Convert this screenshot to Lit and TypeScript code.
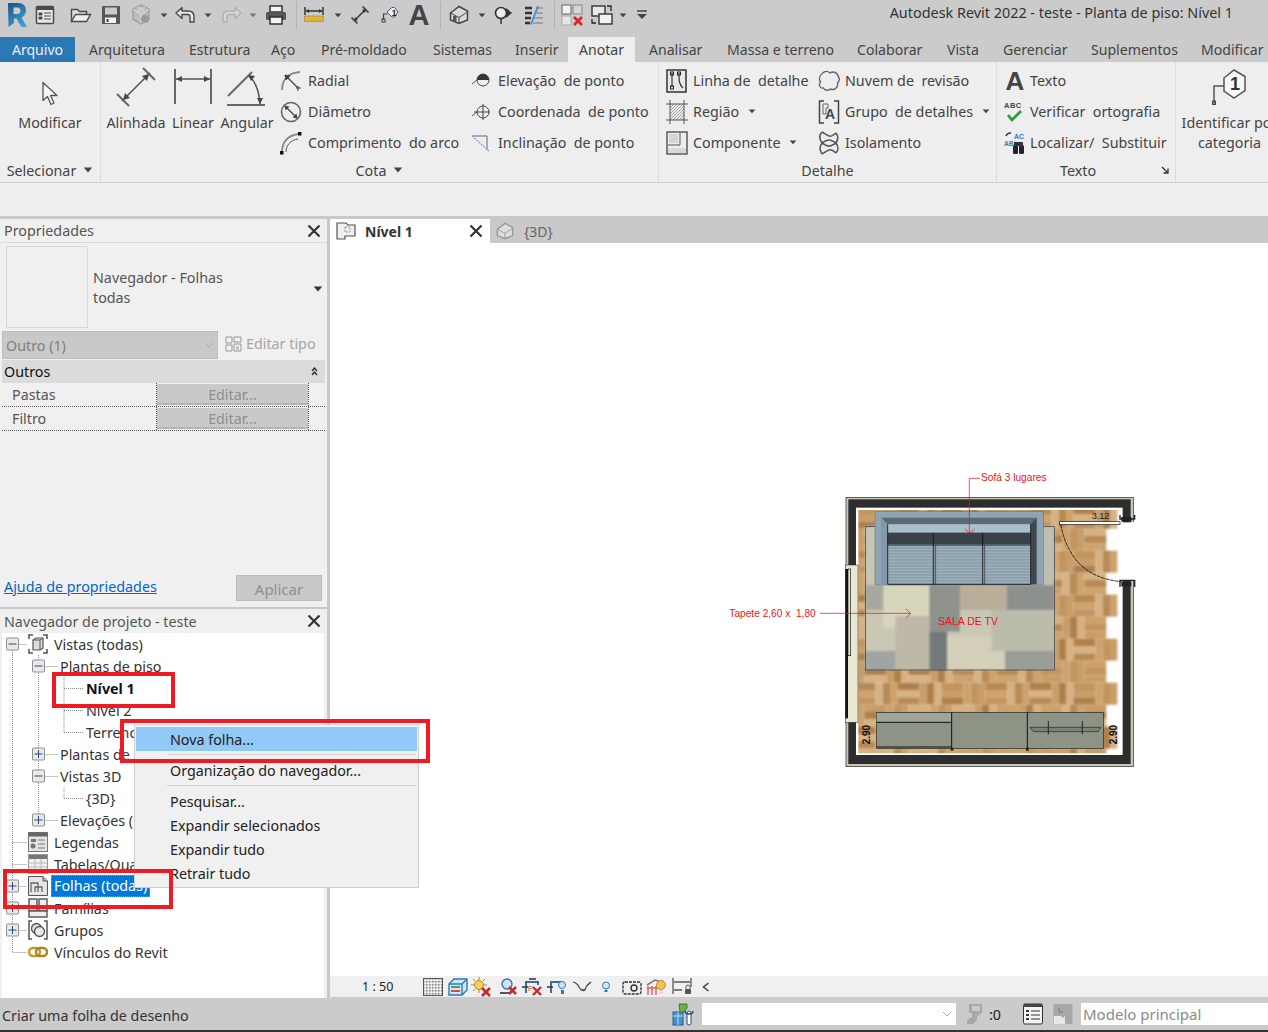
import { LitElement, html, css, svg } from "lit";
import { customElement } from "lit/decorators.js";

const G = "#4a4a4a";
const ic = (w: number, h: number, c: unknown, vb?: string) =>
  html`<svg class="ic" width=${w} height=${h} viewBox=${vb || `0 0 ${w} ${h}`}>${c}</svg>`;
const caret = (c = "#444", w = 8) => html`<svg class="ic" width=${w} height=${w * 0.6} viewBox="0 0 8 5"><path d="M0.500 0.500h7L4 4.500z" fill=${c}/></svg>`;

/* ---------- quick access icons ---------- */
const q = {
  logo: ic(22, 28, svg`<defs><linearGradient id="rg" x1="0" y1="0" x2="0.6" y2="1"><stop offset="0" stop-color="#1f4e86"/><stop offset="1" stop-color="#3aa0d8"/></linearGradient></defs>
    <path fill-rule="evenodd" d="M2 2h10c5.500 0 8 3 8 7.500 0 3.500-2 6-4.500 7l5.500 9.500h-5.500l-5-8.500h-2.500v4.500l-5.500 4zM7.500 6.500v6.500h4c2 0 3-1.500 3-3.300s-1-3.200-3-3.200z" fill="url(#rg)"/>`),
  list: ic(20, 20, svg`<rect x="1.500" y="1.500" width="17" height="17" rx="1" fill="#e8e8e8" stroke=${G} stroke-width="1.500"/><rect x="2" y="2" width="16" height="3" fill=${G}/><path d="M4 8h3v2H4zM4 12h3v2H4zM9 8h7M9 11h7M9 14h7" stroke=${G} fill=${G}/>`),
  open: ic(22, 18, svg`<path d="M1.500 15.500v-12h6l2 2h7v3" fill="#ddd" stroke=${G} stroke-width="1.400"/><path d="M1.500 15.500l4-7h15l-4 7z" fill="#eee" stroke=${G} stroke-width="1.400"/>`),
  save: ic(20, 20, svg`<rect x="1" y="1" width="18" height="18" rx="1" fill="#565656"/><rect x="4" y="2.500" width="12" height="7" fill="#c9c9c9"/><rect x="4" y="12.500" width="11" height="5.500" fill="#f2f2f2"/><rect x="5.500" y="14" width="2" height="3" fill="#444"/>`),
  cube: ic(22, 24, svg`<path d="M11 2l8 4v10l-8 5-8-5V6z" fill="#bdbdbd" stroke="#a2a2a2" stroke-width="1.500"/><path d="M3 6l8 5 8-5M11 11v9M7 4l8 5M15 4L7 9" fill="none" stroke="#e0e0e0"/><circle cx="15" cy="16" r="4" fill="#9a9a9a"/>`),
  undo: ic(22, 18, svg`<path d="M2 7l6-5.500v3.500h6c4 0 6 2 6 5.500V16h-4v-5c0-1.500-1-2.500-2.500-2.500H8v4z" fill="#e6e6e6" stroke=${G} stroke-width="1.400" stroke-linejoin="round"/>`),
  redo: ic(22, 18, svg`<path d="M20 7l-6-5.500v3.500H8c-4 0-6 2-6 5.500V16h4v-5c0-1.500 1-2.500 2.500-2.500H14v4z" fill="#d6d6d6" stroke="#b0b0b0" stroke-width="1.400" stroke-linejoin="round"/>`),
  print: ic(22, 20, svg`<rect x="5" y="1" width="12" height="6" fill="#f3f3f3" stroke="#333" stroke-width="1.500"/><rect x="1" y="7" width="20" height="8" rx="1.500" fill="#555"/><rect x="5" y="12" width="12" height="7" fill="#f3f3f3" stroke="#333" stroke-width="1.500"/>`),
  dim: ic(20, 20, svg`<path d="M1 2v8M19 2v8M2 6h16" stroke="#333" stroke-width="1.500"/><path d="M2 6l3-2v4zM18 6l-3-2v4z" fill="#333"/><rect x="0.500" y="11" width="19" height="5.500" fill="#e2b23c" stroke="#a88420" stroke-width="0.600"/>`),
  align: ic(20, 20, svg`<path d="M4.500 15.500L15.500 4.500" stroke="#333" stroke-width="1.500"/><path d="M1.500 12.500l6 6M12.500 1.500l6 6" stroke="#555" stroke-width="1.800"/><path d="M16 4l-1 4-3-3zM4 16l1-4 3 3z" fill="#333"/>`),
  tag: ic(18, 20, svg`<path d="M2.500 15v-6h4" fill="none" stroke="#444" stroke-width="1.200"/><rect x="1" y="14" width="3" height="3" fill="none" stroke="#444"/><path d="M6 7l5-4.500h2.500l3.500 4.500-3.500 5H11z" fill="#f3f3f3" stroke="#555"/><text x="10.700" y="10.500" font-size="8.500" font-weight="700" fill="#222" font-family="Liberation Sans">1</text>`),
  house: ic(20, 20, svg`<path d="M1.500 8L10 1.500 18.500 6v9L10 18.500 1.500 15z" fill="#d9d9d9" stroke="#444" stroke-width="1.500"/><path d="M1.500 8L10 12.500V18.500M10 12.500L18.500 7" fill="none" stroke="#444"/><rect x="4" y="11" width="3.500" height="5.500" fill="#555"/>`),
  pt: ic(20, 20, svg`<circle cx="8" cy="8" r="5.500" fill="#eaeaea" stroke="#333" stroke-width="1.600"/><path d="M13 3l6 5-6 5z" fill="#333"/><path d="M8 14v5" stroke="#333" stroke-width="1.500"/>`),
  lines: ic(20, 20, svg`<path d="M1 3h7M1 8h7M1 13h6M1 18h5" stroke="#333" stroke-width="2.500"/><path d="M12 3h7M11 8h8M10 13h9M9 18h10" stroke="#777" stroke-width="1.200"/><path d="M14 1L7 19.500" stroke="#3a8fe0" stroke-width="1.800"/>`),
  xgrid: ic(22, 22, svg`<rect x="1" y="1" width="9" height="9" fill="#f2f2f2" stroke="#666"/><rect x="12" y="1" width="9" height="9" fill="#d5d5d5" stroke="#888"/><rect x="1" y="12" width="9" height="9" fill="#e6e6e6" stroke="#aaa"/><path d="M13 13l8 8M21 13l-8 8" stroke="#d22" stroke-width="2.600"/>`),
  sw: ic(22, 22, svg`<rect x="1" y="2" width="13" height="10" fill="#e8e8e8" stroke="#333" stroke-width="1.400"/><rect x="8" y="10" width="13" height="10" fill="#f3f3f3" stroke="#333" stroke-width="1.400"/><path d="M16 2h4v5M1 15v4h4" fill="none" stroke="#222" stroke-width="1.300"/>`),
  more: ic(12, 12, svg`<path d="M1 2h10" stroke="#444" stroke-width="1.500"/><path d="M1 5h10L6 10z" fill="#444"/>`),
  sep: html`<span class="qsep"></span>`,
};
const qat: [number, number, unknown][] = [
  [17, 22, q.logo], [45, 20, q.list], [81, 22, q.open], [111, 20, q.save], [141, 22, q.cube], [164, 8, caret()],
  [185, 22, q.undo], [208, 8, caret()], [232, 22, q.redo], [253, 8, caret("#777")], [276, 22, q.print], [296, 1, q.sep],
  [314, 20, q.dim], [338, 8, caret()], [360, 20, q.align], [390, 18, q.tag], [419, 24, html`<span class="biga">A</span>`],
  [440, 1, q.sep], [459, 20, q.house], [482, 8, caret()], [503, 20, q.pt], [534, 20, q.lines], [554, 1, q.sep],
  [572, 22, q.xgrid], [602, 22, q.sw], [623, 8, caret()], [642, 12, q.more],
];

/* ---------- ribbon icons ---------- */
const r = {
  cursor: ic(18, 26, svg`<path d="M2 1.500v18l4.500-4 3.500 8 3-1.500-3.500-7.500H16z" fill="#f6f6f6" stroke="#555" stroke-width="1.300" stroke-linejoin="round"/>`),
  aligned: ic(40, 40, svg`<path d="M6 34L34 6" stroke="#555" stroke-width="1.600"/><path d="M1 27l12 12M27 1l12 12" stroke="#666" stroke-width="2"/><path d="M33 7l-2 7-5-5zM7 33l2-7 5 5z" fill="#3d4a55"/>`),
  linear: ic(40, 38, svg`<path d="M2 0v35M38 0v35" stroke="#666" stroke-width="2"/><path d="M3 10h34" stroke="#555" stroke-width="1.600"/><path d="M3 10l6-3v6zM37 10l-6-3v6z" fill="#3d4a55"/>`),
  angular: ic(40, 38, svg`<path d="M1 27L25 3" stroke="#666" stroke-width="2"/><path d="M0 36h38" stroke="#666" stroke-width="2"/><path d="M22 7c6 5 10 14 11 28" fill="none" stroke="#555" stroke-width="1.600"/><path d="M21 6l7 1-4 5zM33 35l-3-6h6z" fill="#3d4a55"/>`),
  radial: ic(22, 22, svg`<path d="M2 20c0-10 6-17 18-18" fill="none" stroke="#888" stroke-width="1.800"/><path d="M7 7l11 11" stroke="#444" stroke-width="1.200"/><path d="M5 5l5 1-4 4zM18 16v5M16 18h5" stroke="#444" fill="#444"/>`),
  diam: ic(22, 22, svg`<circle cx="11" cy="11" r="9.500" fill="#eee" stroke="#666" stroke-width="1.600"/><path d="M5 5l12 12" stroke="#444" stroke-width="1.200"/><path d="M4.500 4.500l5 1-4 4zM17.500 17.500l-5-1 4-4z" fill="#444"/>`),
  arc: ic(24, 24, svg`<path d="M3 21C3 11 9 4 20 3" fill="none" stroke="#888" stroke-width="1.800"/><path d="M7 21C7 14 12 9 19 8" fill="none" stroke="#555" stroke-width="1"/><rect x="19" y="1" width="3.500" height="3.500" fill="#111"/><rect x="1" y="20" width="3.500" height="3.500" fill="#111"/>`),
  elev: ic(20, 16, svg`<path d="M1 11l5-4h4" stroke="#555" fill="none"/><circle cx="12" cy="7" r="6" fill="#eee" stroke="#444"/><path d="M12 1a6 6 0 0 1 6 6H6a6 6 0 0 1 6-6z" fill="#333"/>`),
  coord: ic(20, 16, svg`<path d="M1 12l5-4" stroke="#555"/><circle cx="12" cy="8" r="6" fill="none" stroke="#444"/><path d="M3 8h16M12 0v16" stroke="#444"/>`),
  slope: ic(20, 18, svg`<path d="M1 2h15v14" fill="none" stroke="#666"/><path d="M1 2l17 15" stroke="#7fa9d6" stroke-width="1.400" stroke-dasharray="2 1"/>`),
  dline: ic(22, 24, svg`<rect x="1" y="1" width="19" height="22" fill="#e8e8e8" stroke="#333" stroke-width="1.500"/><path d="M6 4v14M13 4c0 8 0 11 4 15" fill="none" stroke="#333" stroke-width="1.200"/><rect x="4.500" y="3" width="3" height="3" fill="none" stroke="#222"/><rect x="11.500" y="3" width="3" height="3" fill="none" stroke="#222"/><rect x="4.500" y="17" width="3" height="3" fill="none" stroke="#222"/>`),
  region: ic(22, 24, svg`<defs><pattern id="hp" width="3" height="3" patternUnits="userSpaceOnUse"><path d="M0 3L3 0" stroke="#888" stroke-width="0.800"/></pattern></defs><rect x="4" y="4" width="14" height="16" fill="url(#hp)"/><path d="M0 4h22M0 20h22M4 0v24M18 0v24" stroke="#555"/>`),
  comp: ic(22, 24, svg`<rect x="1" y="1" width="20" height="22" fill="#ededed" stroke="#444" stroke-width="1.300"/><path d="M14 2v12H2" fill="none" stroke="#555"/><rect x="3" y="3" width="9" height="9" fill="#d4d4d4"/><rect x="2" y="17" width="18" height="5" fill="#d8d8d8"/>`),
  cloud: ic(22, 22, svg`<path d="M6 2c3-1.500 5 0 6 1 2-1.500 7-1.500 8 3 1.500 2 1.500 5-.5 7 1 4-3 8-7 6-2 2-6 1.500-7-1-4 1-5-4-3-6-2-3-1-7 3.500-10z" fill="none" stroke="#666" stroke-width="1.400"/>`),
  group: ic(22, 24, svg`<path d="M6 1H1.500v22H6M16 1h4.500v22H16" fill="none" stroke="#444" stroke-width="1.500"/><path d="M5 4h5v4H8v6H5z" fill="none" stroke="#666"/><text x="7" y="19" font-size="14" font-weight="700" fill="#445" font-family="Liberation Sans">A</text>`),
  iso: ic(20, 24, svg`<path d="M3 1c8 5 8 6 14 1M3 23c8-5 8-6 14-1M3 12c6-4 8-4 14 0M3 12c6 4 8 4 14 0M3 1C-1 5 1 9 3 12M17 2c3 4 2 7 0 10M3 12c-3 4-2 8 0 11M17 12c3 4 2 8 0 10" fill="none" stroke="#555" stroke-width="1.600"/>`),
  bigA: html`<span class="biga rb">A</span>`,
  abc: ic(22, 22, svg`<text x="0" y="7" font-size="7.500" font-weight="700" fill="#444" font-family="Liberation Sans" letter-spacing="0.500">ABC</text><path d="M4 14l4 5 9-9" fill="none" stroke="#2e9b3f" stroke-width="2.800"/>`),
  find: ic(22, 24, svg`<text x="10" y="8" font-size="7" font-weight="700" fill="#2b7cc5" font-family="Liberation Sans">AC</text><text x="0" y="15" font-size="6.500" font-weight="700" fill="#2b7cc5" font-family="Liberation Sans">AB</text><path d="M2 5c1-3 3-3 5-3" fill="none" stroke="#333" stroke-width="1.500"/><rect x="9" y="14" width="5" height="9" rx="1.500" fill="#223"/><rect x="15" y="14" width="5" height="9" rx="1.500" fill="#223"/><rect x="10" y="11" width="9" height="4" fill="#334"/>`),
  identify: ic(36, 38, svg`<path d="M2 35V17h12" fill="none" stroke="#555" stroke-width="1.500"/><rect x="0.500" y="32" width="3" height="3.500" fill="none" stroke="#444"/><path d="M12 9L22 1l11 6.500v14L22 29l-10-7z" fill="#f7f7f7" stroke="#555" stroke-width="1.500"/><text x="18" y="21" font-size="18" font-weight="700" fill="#333" font-family="Liberation Sans">1</text>`),
  corner: ic(8, 8, svg`<path d="M1 1l5 5M7 2.500V7H2.500" fill="none" stroke="#333" stroke-width="1.300"/>`),
};

/* ---------- view & status icons ---------- */
const v: unknown[] = [
  ic(20, 18, svg`<defs><pattern id="dp" width="3" height="3" patternUnits="userSpaceOnUse"><rect width="3" height="3" fill="#eee"/><rect width="1.500" height="1.500" fill="#777"/></pattern></defs><rect x="0.500" y="0.500" width="19" height="17" fill="url(#dp)" stroke="#555"/>`),
  ic(20, 18, svg`<path d="M1 6l5-5h13v11l-5 5H1z" fill="#d4e6f5" stroke="#2a7ab8" stroke-width="1.400"/><path d="M1 6h13v11M14 6l5-5" fill="none" stroke="#2a7ab8" stroke-width="1.400"/><path d="M3 9h9" stroke="#3dab55" stroke-width="2"/><path d="M3 13h9" stroke="#d44" stroke-width="2"/>`),
  ic(20, 20, svg`<circle cx="8" cy="8" r="4.500" fill="#f5cf5e" stroke="#b08a2a"/><path d="M8 0v3M8 13v3M0 8h3M13 8h3M2 2l2 2M12 12l2 2M2 14l2-2M12 4l2-2" stroke="#b08a2a"/><path d="M11 11l8 8M19 11l-8 8" stroke="#c62a2a" stroke-width="2.600"/>`),
  ic(18, 18, svg`<circle cx="8" cy="6" r="5" fill="#cfe3f4" stroke="#3a6e9c" stroke-width="1.300"/><path d="M1 15h9" stroke="#333" stroke-width="1.600"/><path d="M10 9l7 7M17 9l-7 7" stroke="#c62a2a" stroke-width="2.600"/>`),
  ic(20, 18, svg`<path d="M4 15V4h12v3" fill="none" stroke="#3a6e9c" stroke-width="2"/><path d="M0 9h6M7 1h7" stroke="#333" stroke-width="1.500"/><text x="6" y="13" font-size="8" fill="#d33" font-family="Liberation Sans">F</text><path d="M11 9l8 8M19 9l-8 8" stroke="#c62a2a" stroke-width="2.400"/>`),
  ic(20, 18, svg`<path d="M4 15V4h10v3" fill="none" stroke="#3a6e9c" stroke-width="2"/><path d="M0 9h6" stroke="#333" stroke-width="1.500"/><circle cx="15" cy="7" r="3.500" fill="#cfe3f4" stroke="#2a7ab8"/><path d="M14 12h3v4h-3z" fill="#2a7ab8"/>`),
  ic(20, 14, svg`<path d="M1 2c2 0 3 1 5 3" fill="none" stroke="#444" stroke-width="1.200"/><path d="M6 5c3 6 7 8 8 2 2-3 4-4 5-5" fill="none" stroke="#444" stroke-width="1.300"/><path d="M6 6c2 3 5 5 7 3" fill="#cfe3f4" stroke="#444"/>`),
  ic(8, 12, svg`<circle cx="4" cy="4.500" r="3.500" fill="#cfe6f8" stroke="#2a7ab8"/><path d="M2.500 9h3v2h-3z" fill="#2a7ab8"/>`),
  ic(20, 16, svg`<rect x="1" y="3" width="18" height="12" rx="2" fill="#eee" stroke="#333" stroke-width="1.400" stroke-dasharray="3 1"/><circle cx="12" cy="9" r="3" fill="none" stroke="#333" stroke-width="1.400"/>`),
  ic(20, 18, svg`<path d="M1 7l8-5 6 2" fill="none" stroke="#777" stroke-width="1.500"/><path d="M2 17V8M6 17V8M10 17V8M1 10h11" stroke="#d66" stroke-width="1.500"/><circle cx="15" cy="7" r="4.500" fill="#f2c04d" stroke="#c2902a"/><path d="M13 12h4v4h-4z" fill="#ddd"/>`),
  ic(20, 18, svg`<path d="M1 0v16M19 0v9M2 4h16M2 12h8" stroke="#555" stroke-width="1.300"/><rect x="13" y="11" width="6" height="5" rx="1" fill="#555"/><path d="M14 11V9a2 2 0 0 1 4 0v2" fill="none" stroke="#555"/>`),
];
const vx = [433, 458, 481, 507.5, 532, 556.5, 582, 605.5, 631.5, 656, 682];

/* ---------- tree ---------- */
type Row = { t: string; lv: 0 | 1 | 2; box?: "+" | "-"; icon?: unknown; b?: boolean; sel?: boolean; vl: [number, number, number][]; };
const ti = {
  views: ic(20, 20, svg`<path d="M1 5V1h4M15 1h4v4M19 15v4h-4M5 19H1v-4" fill="none" stroke="#555" stroke-width="1.600"/><path d="M5 6l3-2h7v10l-3 2H5z" fill="#ddd" stroke="#555" stroke-width="1.200"/><path d="M5 6h7v10M12 6l3-2" fill="none" stroke="#555"/>`),
  legend: ic(20, 20, svg`<rect x="0.500" y="0.500" width="19" height="19" fill="#e4e4e4" stroke="#777"/><rect x="0.500" y="0.500" width="19" height="4" fill="#666"/><rect x="3" y="7" width="5" height="3" fill="#777"/><path d="M10 8h7M10 12h7M10 16h7" stroke="#777"/><circle cx="5" cy="14" r="2.500" fill="#777"/>`),
  table: ic(20, 20, svg`<rect x="0.500" y="0.500" width="19" height="19" fill="#efefef" stroke="#999"/><rect x="1" y="1" width="18" height="4" fill="#777"/><path d="M1 9h18M1 13h18M1 17h18M7 5v14M13 5v14" stroke="#bbb"/>`),
  sheet: ic(20, 20, svg`<path d="M0.500 0.500H15L19.500 5v14.500H0.500z" fill="#e6e6e6" stroke="#555"/><path d="M15 0.500V5h4.500" fill="#bbb" stroke="#555"/><path d="M3 16V7h7v9M7 16v-5h7v5" fill="none" stroke="#666" stroke-width="1.300"/>`),
  family: ic(20, 20, svg`<rect x="1" y="1" width="8" height="12" fill="#eee" stroke="#555" stroke-width="1.400"/><rect x="11" y="1" width="8" height="12" fill="#eee" stroke="#555" stroke-width="1.400"/><rect x="1" y="13" width="18" height="6" fill="#eee" stroke="#555" stroke-width="1.400"/>`),
  group: ic(20, 20, svg`<path d="M4 1H1v18h3M16 1h3v18h-3" fill="none" stroke="#555" stroke-width="1.500"/><circle cx="8.500" cy="8.500" r="5" fill="#ddd" stroke="#555" stroke-width="1.300"/><circle cx="11.500" cy="11.500" r="5" fill="#e8e8e8" stroke="#555" stroke-width="1.300"/>`),
  link: ic(20, 12, svg`<rect x="1" y="2" width="11" height="8" rx="4" fill="none" stroke="#c09a2a" stroke-width="2.400"/><rect x="8" y="2" width="11" height="8" rx="4" fill="none" stroke="#a8861f" stroke-width="2.400"/>`),
};
const R0: [number, number, number] = [12.5, 0, 22];
const R1: [number, number, number] = [38.5, 0, 22];
const R2: [number, number, number] = [64, 0, 22];
const rows: Row[] = [
  { t: "Vistas (todas)", lv: 0, box: "-", icon: ti.views, vl: [[12.5, 11, 22]] },
  { t: "Plantas de piso", lv: 1, box: "-", vl: [R0, R1, [64, 17, 22]] },
  { t: "Nível 1", lv: 2, b: true, vl: [R0, R1, R2] },
  { t: "Nível 2", lv: 2, vl: [R0, R1, R2] },
  { t: "Terreno", lv: 2, vl: [R0, R1, [64, 0, 11]] },
  { t: "Plantas de", lv: 1, box: "+", vl: [R0, R1] },
  { t: "Vistas 3D", lv: 1, box: "-", vl: [R0, R1, [64, 17, 22]] },
  { t: "{3D}", lv: 2, vl: [R0, R1, [64, 0, 11]] },
  { t: "Elevações (", lv: 1, box: "+", vl: [R0, [38.5, 0, 11]] },
  { t: "Legendas", lv: 0, icon: ti.legend, vl: [R0] },
  { t: "Tabelas/Qua", lv: 0, icon: ti.table, vl: [R0] },
  { t: "Folhas (todas)", lv: 0, box: "+", icon: ti.sheet, sel: true, vl: [R0] },
  { t: "Famílias", lv: 0, box: "+", icon: ti.family, vl: [R0] },
  { t: "Grupos", lv: 0, box: "+", icon: ti.group, vl: [R0] },
  { t: "Vínculos do Revit", lv: 0, icon: ti.link, vl: [[12.5, 0, 11]] },
];
const hx = [[12.5, 27], [38.5, 58], [64, 83]];
const bx = [12.5, 38.5];
const guides = (x: Row) => {
  const w = [28, 60, 86][x.lv];
  const [a, b] = hx[x.lv];
  return html`<svg class="ic" width=${w} height="22" viewBox="0 0 ${w} 22">
    ${x.vl.map(([vxx, y1, y2]) => svg`<path d="M${vxx} ${y1}V${y2}" stroke="#8a8a8a" stroke-dasharray="1 1" fill="none"/>`)}
    <path d="M${a} 11.500H${b}" stroke="#8a8a8a" stroke-dasharray="1 1" fill="none"/>
    ${x.box ? svg`<rect x=${bx[x.lv] - 6} y="5" width="12" height="12" rx="1" fill="#e9e9e9" stroke="#8f8f8f"/>
      <path d="M${bx[x.lv] - 4} 11H${bx[x.lv] + 4}" stroke="#2b4a7a"/>
      ${x.box === "+" ? svg`<path d="M${bx[x.lv]} 7V15" stroke="#2b4a7a"/>` : ""}` : ""}
  </svg>`;
};

/* ---------- floor plan (drawn in a 1290x930 space, 3 units per px) ---------- */
const woods = ["#c2945f", "#cda26c", "#b78a56", "#d6b283", "#ae804c", "#c89d68"];
const parquet: unknown[] = [];
for (let j = 0; j < 12; j++)
  for (let i = 0; i < 12; i++) {
    const x = 400 + i * 66 - (j % 2) * 33, y = 125 + j * 66, h = (i + j) % 2 === 0;
    for (let k = 0; k < 3; k++) {
      const f = woods[(i * 7 + j * 13 + k * 5 + ((i * j) % 4)) % 6];
      parquet.push(h ? svg`<rect x=${x} y=${y + k * 22} width="66" height="22" fill=${f}/>` : svg`<rect x=${x + k * 22} y=${y} width="22" height="66" fill=${f}/>`);
    }
  }
const rug: [number, number, number, number, string][] = [
  [436, 185, 567, 430, "#c8c8b5"], [436, 185, 29, 175, "#c6c6b4"], [970, 185, 33, 175, "#bfc0b0"],
  [490, 360, 138, 130, "#d8d5bd"], [436, 360, 54, 75, "#a7a8a0"], [628, 360, 92, 140, "#8e918c"],
  [720, 360, 140, 75, "#b9ae98"], [860, 360, 143, 75, "#8d918e"], [526, 453, 102, 162, "#bdb9a6"],
  [628, 500, 54, 115, "#73787a"], [682, 512, 173, 103, "#d3cfb9"], [815, 435, 188, 123, "#bcbcac"],
  [855, 558, 148, 57, "#9a9d97"], [436, 558, 90, 57, "#a0a4a3"],
];
const stripes: unknown[] = [];
for (const cx of [505, 650, 795])
  for (let y = 242; y < 354; y += 9)
    stripes.push(svg`<rect x=${cx} y=${y} width="135" height="4" fill="#a9bac6" opacity="0.6"/>`);

const plan = html`<svg class="plan" width="430" height="310" viewBox="0 0 1290 930">
  <defs><filter id="soft"><feGaussianBlur stdDeviation="3"/></filter><clipPath id="fl"><rect x="415" y="135" width="785" height="730"/></clipPath></defs>
  <rect x="378" y="97" width="862" height="808" fill="#c9c7b5" stroke="#222" stroke-width="2"/>
  <rect x="385" y="103" width="847" height="794" fill="#2d2d2d"/>
  <rect x="408" y="128" width="800" height="742" fill="#fff"/>
  <g clip-path="url(#fl)"><g filter="url(#soft)">${parquet}</g></g>
  <rect x="1204" y="172" width="40" height="176" fill="#fff"/>
  <rect x="1232" y="172" width="12" height="176" fill="#fff"/>
  <path d="M1200 150v12h44v-12M1200 350v-4h44v20M1200 366v-20" fill="none" stroke="#222" stroke-width="4"/>
  <rect x="1204" y="156" width="30" height="14" fill="#222"/><rect x="1204" y="350" width="30" height="14" fill="#222"/>
  <rect x="1018" y="170" width="182" height="9" fill="#fff" stroke="#111" stroke-width="2"/>
  <path d="M1022 178C1040 270 1090 340 1205 350" fill="none" stroke="#111" stroke-width="2.500" stroke-dasharray="12 2"/>
  <rect x="376" y="300" width="38" height="472" fill="#e9e6d2" stroke="#222" stroke-width="1.500"/>
  <rect x="376" y="312" width="8" height="448" fill="#111"/><rect x="384" y="312" width="8" height="260" fill="#e9e6d2" stroke="#111" stroke-width="2"/>
  <g filter="url(#soft)">${rug.map(([x, y, w, h, f]) => svg`<rect x=${x} y=${y} width=${w} height=${h} fill=${f}/>`)}</g>
  <rect x="436" y="185" width="567" height="430" fill="none" stroke="#334" stroke-width="2"/>
  <rect x="465" y="140" width="505" height="220" fill="#8fa5b4" stroke="#667" stroke-width="1.500"/>
  <path d="M483 158H950L932 178H503z" fill="#5b6a75"/><path d="M483 158L503 178V358H483z" fill="#8199aa"/><path d="M950 158L932 178V358H950z" fill="#3f474d"/>
  <rect x="503" y="178" width="429" height="25" fill="#a8bfcc"/><rect x="503" y="203" width="429" height="35" fill="#3a4248"/>
  <rect x="503" y="238" width="429" height="120" fill="#8b9fac"/>${stripes}
  <path d="M503 240H932M640 203V358M788 203V358M503 178V358M932 178V358M503 358H932" fill="none" stroke="#111" stroke-width="2.500"/>
  <path d="M646 240V358M794 240V358" stroke="#111" stroke-width="1.500"/>
  <rect x="470" y="742" width="680" height="108" fill="#8d9486" stroke="#222" stroke-width="2"/>
  <rect x="470" y="744" width="225" height="27" fill="#a0a699"/>
  <path d="M470 772H695M695 742V855M922 742V855M470 846H695" fill="none" stroke="#111" stroke-width="3"/>
  <path d="M930 787H1143L1134 800H940z" fill="#7b8175" stroke="#222" stroke-width="2"/><path d="M985 768V808M1087 768V808" stroke="#222" stroke-width="3"/>
  <rect x="692" y="848" width="8" height="9" fill="#222"/><rect x="918" y="848" width="8" height="9" fill="#222"/>
  <text class="pt" x="1115" y="162" fill="#222">3.12</text>
  <text class="pt b" transform="translate(451 838) rotate(-90)" fill="#111">2.90</text>
  <text class="pt b" transform="translate(1190 838) rotate(-90)" fill="#111">2.90</text>
  <g stroke="#e8141c" fill="none" stroke-width="2.200">
    <path d="M780 40H748V205M735 192L748 205L764 192"/>
    <path d="M300 445H572M558 432L572 445L558 460"/>
  </g>
  <text class="pt r" x="783" y="47">Sofá 3 lugares</text>
  <text class="pt r" x="28" y="455">Tapete 2,60 x  1,80</text>
  <text class="pt r s" x="654" y="479">SALA DE TV</text>
</svg>`;

const X = html`<svg class="ic" width="14" height="14" viewBox="0 0 14 14"><path d="M1.500 1.500l11 11M12.500 1.500l-11 11" stroke="#333" stroke-width="2.200"/></svg>`;

@customElement("app-root")
export class AppRoot extends LitElement {
  static styles = css`
    :host { display: flex; flex-direction: column; position: relative; width: 1268px; height: 1032px; overflow: hidden; background: #eee;
      font-family: "Noto Sans", "Liberation Sans", sans-serif; font-size: 14.3px; color: #444; }
    .ic { display: block; flex: none; }
    .qat { height: 37px; background: #cbcbcb; display: flex; align-items: flex-start; flex: none; }
    .slot { height: 30px; display: flex; align-items: center; justify-content: center; flex: none; }
    .qsep { width: 1px; height: 28px; background: #b4b4b4; }
    .biga { font: 700 29px/30px "Liberation Sans", sans-serif; color: #444; }
    .biga.rb { font-size: 26px; line-height: 26px; }
    .title { margin-left: auto; padding-right: 35px; line-height: 26px; color: #333; white-space: nowrap; font-size: 14.4px; }
    .tabs { height: 25px; background: #cbcbcb; display: flex; flex: none; font-size: 14.1px; }
    .tab { height: 25px; line-height: 25px; flex: none; white-space: nowrap; }
    .tab.file { background: #2a78b4; color: #eef; text-align: center; }
    .tab.on { background: #eee; text-align: center; }
    .ribbon { height: 121px; flex: none; display: flex; background: #eee; border-bottom: 1px solid #d2d2d2; box-sizing: border-box; }
    .panel { flex: none; display: flex; flex-direction: column; border-right: 1px solid #dcdcdc; box-sizing: border-box; }
    .panel.last { border-right: 0; }
    .pbody { height: 98px; display: flex; padding-top: 3px; box-sizing: border-box; }
    .pfoot { flex: 1; display: flex; align-items: center; justify-content: center; gap: 7px; position: relative; padding-bottom: 2px; }
    .pfoot.tx { padding-right: 16px; }
    .lg { display: flex; flex-direction: column; align-items: center; flex: none; text-align: center; line-height: 20px; white-space: nowrap; }
    .lgi { height: 42px; display: flex; align-items: flex-end; justify-content: center; margin-bottom: 6px; }
    .lead { width: 3px; flex: none; }
    .col { flex: none; display: flex; flex-direction: column; }
    .sm { height: 31px; display: flex; align-items: center; white-space: pre; }
    .si { flex: none; display: flex; align-items: center; justify-content: center; }
    .caretm { margin-left: 9px; }
    .corner { position: absolute; right: 6px; top: 6px; }
    .spacer { height: 33px; background: #eee; flex: none; }
    .work { flex: 1; min-height: 0; display: flex; border-top: 3px solid #c9c9c9; }
    .left { width: 327px; flex: none; display: flex; flex-direction: column; background: #f0f0f0; }
    .vdiv { width: 3px; background: #c9c9c9; flex: none; }
    .props { height: 388px; flex: none; display: flex; flex-direction: column; }
    .phead { height: 23px; flex: none; display: flex; align-items: center; justify-content: space-between; padding: 0 6px 0 4px; color: #555; }
    .phead.nav { height: 24px; }
    .thumbrow { height: 88px; flex: none; border-top: 1px solid #dadada; display: flex; align-items: center; padding: 0 4px 0 6px; color: #555; }
    .thumb { width: 80px; height: 80px; border: 1px solid #d8d8d8; background: #f0f0f0; flex: none; margin-right: 5px; }
    .tname { line-height: 20px; flex: 1; padding-top: 2px; }
    .seltri { margin-top: 3px; flex: none; }
    .typerow { height: 28px; flex: none; display: flex; padding-left: 2px; }
    .combo { width: 216px; background: #c9c9c9; border: 1px solid #bdbdbd; box-sizing: border-box; display: flex; align-items: center; justify-content: space-between; padding: 0 3px; color: #808080; }
    .edit { display: flex; align-items: center; gap: 4px; margin-left: 7px; color: #a6a6a6; margin-top: -3px; }
    .group { height: 23px; margin: 1px 2px 0 2px; background: #dbdbdb; display: flex; align-items: center; justify-content: space-between; padding: 0 7px 0 2px; color: #111; flex: none; }
    .prow { height: 24px; margin: 0 2px; display: flex; flex: none; border-bottom: 1px dotted #555; box-sizing: border-box; color: #555; }
    .prow .k { width: 155px; padding-left: 10px; box-sizing: border-box; border-right: 1px dotted #555; line-height: 23px; }
    .prow .btn { width: 151px; margin: 1px 0; background: #c9c9c9; border-bottom: 2px solid #b5b5b5; color: #8f8f8f; text-align: center; line-height: 21px; box-sizing: border-box; }
    .prow .e { flex: 1; border-left: 1px dotted #555; }
    .pfill { flex: 1; }
    .pbot { height: 32px; flex: none; display: flex; justify-content: space-between; padding: 0 5px 0 4px; align-items: flex-start; box-sizing: border-box; }
    .help { color: #0066cc; text-decoration: underline; line-height: 24px; }
    .apply { width: 86px; height: 26px; background: #c9c9c9; border: 1px solid #bbb; box-sizing: border-box; color: #8f8f8f; text-align: center; line-height: 26px; font-size: 15px; }
    .hdiv { height: 2px; background: #c9c9c9; flex: none; }
    .tree { flex: 1; margin: 0 3px 0 2px; background: #fff; color: #333; overflow: hidden; }
    .row { height: 22px; display: flex; align-items: center; margin-left: -2px; white-space: nowrap; }
    .ticon { width: 20px; height: 22px; display: flex; align-items: center; justify-content: center; flex: none; }
    .t0 { margin-left: 6px; }
    .tb { font-weight: 700; color: #111; }
    .tsel { margin-left: 3px; padding: 0 3px; background: #0078d7; color: #fff; height: 22px; line-height: 22px; box-sizing: border-box; outline: 1px dotted #e58a1f; outline-offset: -1px; }
    .viewcol { flex: 1; min-width: 0; display: flex; flex-direction: column; }
    .vtabs { height: 24px; background: #c9c9c9; display: flex; flex: none; }
    .vtab { width: 160px; background: #fff; display: flex; align-items: center; padding: 0 7px 0 6px; box-sizing: border-box; color: #333; font-weight: 700; flex: none; }
    .vtab .nm { flex: 1; margin-left: 9px; font-size: 14px; }
    .vtab2 { display: flex; align-items: center; margin-left: 6px; gap: 10px; color: #666; font-size: 14px; }
    .canvas { flex: 1; background: #fff; position: relative; min-height: 0; }
    .plan { position: absolute; left: 390px; top: 222px; }
    .pt { font: 400 27px "Liberation Sans", sans-serif; white-space: pre; }
    .pt.b { font-weight: 700; font-size: 30px; }
    .pt.r { fill: #e8141c; font-size: 30.500px; }
    .pt.r.s { font-size: 31.500px; }
    .vbar { height: 21px; flex: none; background: #f0f0f0; border-bottom: 1px solid #c9c9c9; display: flex; align-items: center; margin-left: 1px; color: #222; font-size: 12.500px; }
    .scale { width: 92px; padding-left: 31px; box-sizing: border-box; flex: none; white-space: pre; }
    .vslot { flex: none; display: flex; justify-content: center; }
    .vchev { margin-left: 8px; }
    .status { height: 32px; flex: none; background: #cbcbcb; display: flex; align-items: center; color: #333; }
    .stxt { width: 672px; padding-left: 2px; box-sizing: border-box; flex: none; padding-top: 2px; }
    .sinput { height: 22px; background: #fff; flex: none; display: flex; align-items: center; box-sizing: border-box; }
    .sin1 { width: 254px; margin-left: 8px; justify-content: flex-end; padding-right: 4px; }
    .sin2 { flex: 1; margin-left: 8px; padding-left: 2px; color: #8a8a8a; font-size: 15px; }
    .sflt { margin-left: 10px; }
    .slay { margin-left: 10px; }
    .zero { color: #222; margin: 0 22px 0 5px; }
    .edge { height: 2px; flex: none; background: #333; }
    .menu { position: absolute; left: 134px; top: 724px; width: 285px; height: 164px; background: #f0f0f0; border: 1px solid #d0d0d0; box-sizing: border-box; padding: 2px 1px; color: #222; }
    .mi { height: 24px; line-height: 26px; padding-left: 34px; }
    .mi.hi { background: #91c9f7; }
    .msep { height: 1px; margin: 3px 1px 3px 31px; background: #d5d5d5; }
    .redbox { position: absolute; border: 4px solid #ed1c24; box-sizing: border-box; }
    .rb1 { left: 52px; top: 672px; width: 123px; height: 36px; }
    .rb2 { left: 120px; top: 719px; width: 310px; height: 44px; }
    .rb3 { left: 3px; top: 869px; width: 170px; height: 40px; }
  `;

  private qatBar() {
    let prev = 0;
    return qat.map(([c, w, icon]) => {
      const left = c - w / 2 - prev;
      prev = c + w / 2;
      return html`<span class="slot" style="margin-left:${left}px;width:${w}px">${icon}</span>`;
    });
  }
  private tabsBar() {
    const tabs: [string, number, number, string?][] = [
      ["Arquitetura", 89, 75], ["Estrutura", 189, 58], ["Aço", 271, 26], ["Pré-moldado", 321, 88], ["Sistemas", 433, 58],
      ["Inserir", 515, 40], ["Anotar", 568, 67, "on"], ["Analisar", 649, 54], ["Massa e terreno", 727, 105], ["Colaborar", 857, 66],
      ["Vista", 947, 32], ["Gerenciar", 1003, 63], ["Suplementos", 1091, 86], ["Modificar", 1201, 64],
    ];
    let prev = 75;
    return html`<div class="tab file" style="width:75px">Arquivo</div>${tabs.map(([t, x, w, c]) => {
      const m = x - prev; prev = x + w;
      return html`<div class="tab ${c || ""}" style="margin-left:${m}px;width:${w}px">${t}</div>`;
    })}`;
  }
  private lg(w: number, icon: unknown, label: unknown) {
    return html`<div class="lg" style="width:${w}px"><div class="lgi">${icon}</div>${label}</div>`;
  }
  private col(ml: number, w: number, slot: number, gap: number, items: [unknown, string, boolean?][]) {
    return html`<div class="col" style="margin-left:${ml}px;width:${w}px">${items.map(([i, t, c]) => html`<div class="sm"><span class="si" style="width:${slot}px;margin-right:${gap}px">${i}</span>${t}${c ? html`<span class="caretm">${caret()}</span>` : ""}</div>`)}</div>`;
  }

  render() {
    return html`
      <div class="qat">${this.qatBar()}<span class="title">Autodesk Revit 2022 - teste - Planta de piso: Nível 1</span></div>
      <div class="tabs">${this.tabsBar()}</div>
      <div class="ribbon">
        <div class="panel" style="width:101px">
          <div class="pbody">${this.lg(100, r.cursor, "Modificar")}</div>
          <div class="pfoot">Selecionar ${caret("#444", 10)}</div>
        </div>
        <div class="panel" style="width:558px">
          <div class="pbody">
            <span class="lead"></span>
            ${this.lg(64, r.aligned, "Alinhada")}${this.lg(50, r.linear, "Linear")}${this.lg(58, r.angular, "Angular")}
            ${this.col(3, 191, 24, 5, [[r.radial, "Radial"], [r.diam, "Diâmetro"], [r.arc, "Comprimento  do arco"]])}
            ${this.col(0, 180, 22, 6, [[r.elev, "Elevação  de ponto"], [r.coord, "Coordenada  de ponto"], [r.slope, "Inclinação  de ponto"]])}
          </div>
          <div class="pfoot">Cota ${caret("#444", 10)}</div>
        </div>
        <div class="panel" style="width:338px">
          <div class="pbody">
            ${this.col(6, 152, 24, 4, [[r.dline, "Linha de  detalhe"], [r.region, "Região", true], [r.comp, "Componente", true]])}
            ${this.col(0, 175, 24, 4, [[r.cloud, "Nuvem de  revisão"], [r.group, "Grupo  de detalhes", true], [r.iso, "Isolamento"]])}
          </div>
          <div class="pfoot">Detalhe</div>
        </div>
        <div class="panel" style="width:179px">
          <div class="pbody">${this.col(6, 170, 24, 3, [[r.bigA, "Texto"], [r.abc, "Verificar  ortografia"], [r.find, "Localizar/  Substituir"]])}</div>
          <div class="pfoot tx">Texto<span class="corner">${r.corner}</span></div>
        </div>
        <div class="panel last" style="width:108px">
          <div class="pbody">${this.lg(107, r.identify, html`Identificar por<br />categoria`)}</div>
        </div>
      </div>
      <div class="spacer"></div>
      <div class="work">
        <div class="left">
          <div class="props">
            <div class="phead">Propriedades ${X}</div>
            <div class="thumbrow">
              <div class="thumb"></div>
              <div class="tname">Navegador - Folhas<br />todas</div>
              <span class="seltri">${caret("#333", 10)}</span>
            </div>
            <div class="typerow">
              <div class="combo">Outro (1)<svg class="ic" width="10" height="6" viewBox="0 0 10 6"><path d="M1 1l4 4 4-4" fill="none" stroke="#aaa"/></svg></div>
              <div class="edit"><svg class="ic" width="17" height="16" viewBox="0 0 17 16"><path d="M1 1h6v6H1zM9 1h7v5H9zM1 9h6v6H1zM9 8h7v7H9zM11 11h3M11 13h3" fill="none" stroke="#999"/></svg>Editar tipo</div>
            </div>
            <div class="group">Outros<svg class="ic" width="7" height="9" viewBox="0 0 7 9"><path d="M1 4l2.500-3L6 4M1 8l2.500-3L6 8" fill="none" stroke="#222" stroke-width="1.200"/></svg></div>
            <div class="prow"><div class="k">Pastas</div><div class="btn">Editar...</div><div class="e"></div></div>
            <div class="prow"><div class="k">Filtro</div><div class="btn">Editar...</div><div class="e"></div></div>
            <div class="pfill"></div>
            <div class="pbot"><span class="help">Ajuda de propriedades</span><span class="apply">Aplicar</span></div>
          </div>
          <div class="hdiv"></div>
          <div class="phead nav">Navegador de projeto - teste ${X}</div>
          <div class="tree">
            ${rows.map((x) => html`<div class="row">${guides(x)}${x.icon ? html`<span class="ticon">${x.icon}</span>` : ""}<span class="${x.b ? "tb " : ""}${x.sel ? "tsel" : x.icon ? "t0" : ""}">${x.t}</span></div>`)}
          </div>
        </div>
        <div class="vdiv"></div>
        <div class="viewcol">
          <div class="vtabs">
            <div class="vtab">
              <svg class="ic" width="20" height="18" viewBox="0 0 20 18"><path d="M1 1h9l2 2h7v11H9v3H1z" fill="#efefef" stroke="#555" stroke-width="1.200"/><path d="M9 5h5v5H9z" fill="none" stroke="#999" stroke-dasharray="2 1"/></svg>
              <span class="nm">Nível 1</span>${X}
            </div>
            <div class="vtab2"><svg class="ic" width="18" height="18" viewBox="0 0 20 20"><path d="M1.500 8L10 1.500 18.500 6v9L10 18.500 1.500 15z" fill="#dedede" stroke="#999" stroke-width="1.500"/><path d="M1.500 8L10 12.500V18.500M10 12.500L18.500 7" fill="none" stroke="#999"/></svg><span>{3D}</span></div>
          </div>
          <div class="canvas">${plan}</div>
          <div class="vbar">
            <span class="scale">1 : 50</span>
            ${vx.map((c, i) => {
              const prev = i === 0 ? 331 + 92 : vx[i - 1] + 12;
              return html`<span class="vslot" style="width:24px;margin-left:${c - 12 - prev}px">${v[i]}</span>`;
            })}
            <svg class="ic vchev" width="8" height="10" viewBox="0 0 8 10"><path d="M6.500 1L1.500 5l5 4" fill="none" stroke="#444" stroke-width="1.600"/></svg>
          </div>
        </div>
      </div>
      <div class="status">
        <span class="stxt">Criar uma folha de desenho</span>
        <svg class="ic" width="22" height="24" viewBox="0 0 22 24"><rect x="1" y="10" width="10" height="13" fill="#4a90d0" stroke="#1f5f9f"/><path d="M6 10v13M1 14h10" stroke="#bcd9f2"/><path d="M7 2h8v4l-3 4H8z" fill="#6bb04a" stroke="#3d7d2c"/><rect x="15" y="9" width="4" height="14" rx="2" fill="#fff" stroke="#1f4f7f"/><path d="M13 9c0 4 8 4 8 0" fill="none" stroke="#1f4f7f" stroke-width="1.500"/></svg>
        <div class="sinput sin1"><svg class="ic" width="10" height="6" viewBox="0 0 10 6"><path d="M1 1l4 4 4-4" fill="none" stroke="#aaa"/></svg></div>
        <svg class="ic sflt" width="18" height="22" viewBox="0 0 18 22"><path d="M3 1h13v9l-5 3v4l-4 4H1v-4l5-3v-4H3z" fill="#a8a8a8"/><path d="M6 3h8v5H6z" fill="#cbcbcb"/></svg>
        <span class="zero">:0</span>
        <svg class="ic" width="20" height="22" viewBox="0 0 20 22"><rect x="0.500" y="1" width="19" height="20" rx="1.500" fill="#f4f4f4" stroke="#333"/><rect x="1" y="1" width="18" height="3" fill="#444"/><path d="M3 7h3v2H3zM3 11h3v2H3zM3 15h3v2H3z" fill="#333"/><path d="M8 8h9M8 12h9M8 16h9" stroke="#333"/></svg>
        <svg class="ic slay" width="20" height="22" viewBox="0 0 20 22"><rect x="0.500" y="1" width="19" height="20" fill="#a8a8a8"/><path d="M1 21v-8h7l2 2 2-2v8z" fill="#e8e8e8"/><path d="M6 5v4h4" stroke="#777" fill="none"/></svg>
        <div class="sinput sin2">Modelo principal</div>
      </div>
      <div class="edge"></div>
      <div class="menu">
        <div class="mi hi">Nova folha...</div>
        <div class="msep"></div>
        <div class="mi">Organização do navegador...</div>
        <div class="msep"></div>
        <div class="mi">Pesquisar...</div>
        <div class="mi">Expandir selecionados</div>
        <div class="mi">Expandir tudo</div>
        <div class="mi">Retrair tudo</div>
      </div>
      <div class="redbox rb1"></div>
      <div class="redbox rb2"></div>
      <div class="redbox rb3"></div>
    `;
  }
}
